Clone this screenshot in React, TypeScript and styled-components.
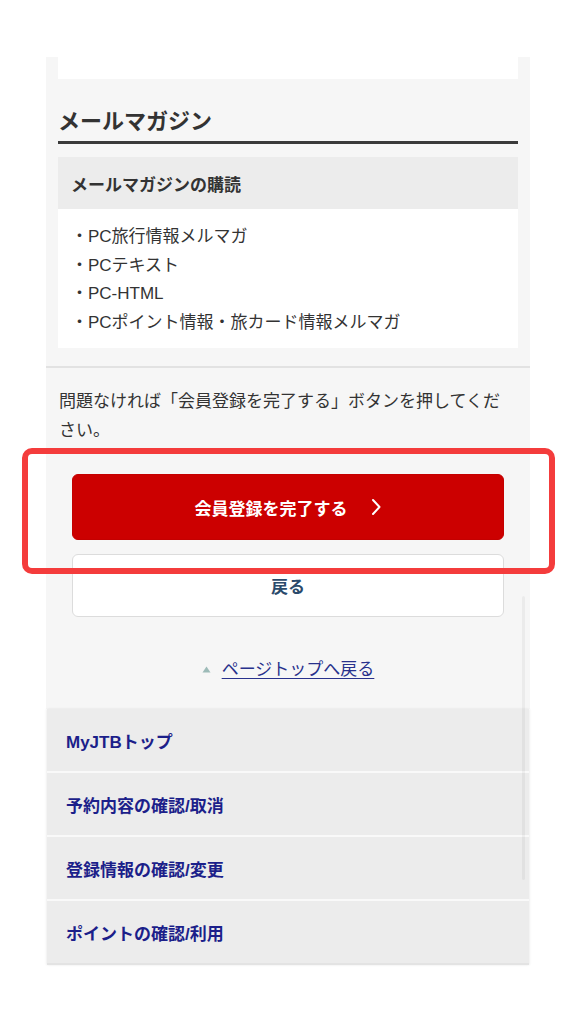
import React from "react";
import styled, { createGlobalStyle } from "styled-components";

const Global = createGlobalStyle`
  html, body {
    margin: 0;
    padding: 0;
    background: #ffffff;
  }
  body {
    font-family: "Liberation Sans", "Noto Sans CJK JP", sans-serif;
    color: #333333;
    -webkit-font-smoothing: antialiased;
  }
  * { box-sizing: border-box; }
`;

const Page = styled.div`
  position: relative;
  width: 576px;
  min-height: 1024px;
  padding-top: 57px;
  background: #ffffff;
`;

const Panel = styled.div`
  width: 484px;
  margin-left: 46px;
  background: #f6f6f6;
`;

const Section = styled.section`
  padding: 0 12px 18px;
  border-bottom: 2px solid #e2e2e2;
`;

const PrevCard = styled.div`
  height: 22px;
  background: #ffffff;
`;

const Title = styled.h2`
  margin: 0;
  padding: 28px 0 4px;
  font-size: 22px;
  line-height: 30px;
  font-weight: 700;
  color: #333333;
  border-bottom: 3px solid #3a3a3a;
`;

const SubHeader = styled.div`
  margin-top: 13px;
  height: 52px;
  display: flex;
  align-items: center;
  padding-left: 13px;
  background: #ececec;
  font-size: 17px;
  font-weight: 700;
  color: #333333;
`;

const List = styled.ul`
  margin: 0;
  list-style: none;
  padding: 14px 13px 11px;
  background: #ffffff;
`;

const Item = styled.li`
  font-size: 17px;
  line-height: 28.5px;
  color: #333333;
`;

const Actions = styled.div`
  padding: 19px 13px 25px;
  display: flex;
  flex-direction: column;
`;

const Note = styled.p`
  margin: 0;
  padding-right: 10px;
  font-size: 17px;
  line-height: 29px;
  color: #333333;
`;

const Button = styled.button<{ $primary?: boolean }>`
  margin: ${(p) => (p.$primary ? "29px 13px 0" : "14px 13px 0")};
  height: ${(p) => (p.$primary ? "66px" : "63px")};
  display: flex;
  align-items: center;
  justify-content: center;
  gap: 22px;
  border-radius: 6px;
  border: 1px solid ${(p) => (p.$primary ? "#c40000" : "#dcdcdc")};
  background: ${(p) => (p.$primary ? "#cc0000" : "#ffffff")};
  color: ${(p) => (p.$primary ? "#ffffff" : "#2b4a6b")};
  font-family: inherit;
  font-size: 17px;
  font-weight: 700;
  cursor: pointer;
`;

const TopLink = styled.a`
  margin-top: 38px;
  align-self: center;
  display: flex;
  align-items: center;
  gap: 11px;
  font-size: 17px;
  line-height: 29px;
  color: #28318c;
  text-decoration: none;
`;

const TopLinkText = styled.span`
  text-decoration: underline;
  text-underline-offset: 3px;
`;

const Footer = styled.nav`
  width: 482px;
  margin-left: 47px;
  display: flex;
  flex-direction: column;
  gap: 2px;
  background: #f9f9f9;
  border-bottom: 2px solid #e3e3e3;
  box-shadow: 1px 0 2px rgba(0, 0, 0, 0.06), -1px 0 2px rgba(0, 0, 0, 0.06);
`;

const FooterRow = styled.a`
  height: 62px;
  display: flex;
  align-items: center;
  padding-left: 19px;
  background: #ececec;
  font-size: 17px;
  font-weight: 700;
  color: #1c1f8a;
  text-decoration: none;
`;

const Highlight = styled.div`
  position: absolute;
  left: 22px;
  top: 448px;
  width: 533px;
  height: 126px;
  border: 6px solid #f43c3c;
  border-radius: 10px;
  pointer-events: none;
`;

const ScrollTrack = styled.div`
  position: absolute;
  left: 522px;
  top: 596px;
  width: 3px;
  height: 284px;
  background: rgba(0, 0, 0, 0.045);
  border-radius: 2px;
`;

const Chevron = () => (
  <svg width="12" height="18" viewBox="0 0 12 18" aria-hidden="true">
    <polyline points="3,2 9.5,9 3,16" fill="none" stroke="#ffffff" strokeWidth="2" strokeLinecap="round" strokeLinejoin="round" />
  </svg>
);

const UpTriangle = () => (
  <svg width="9" height="7" viewBox="0 0 9 7" aria-hidden="true">
    <polygon points="4.5,0.5 8.5,6.5 0.5,6.5" fill="#9dbbb8" />
  </svg>
);

const items = [
  "・PC旅行情報メルマガ",
  "・PCテキスト",
  "・PC-HTML",
  "・PCポイント情報・旅カード情報メルマガ",
];

const links = ["MyJTBトップ", "予約内容の確認/取消", "登録情報の確認/変更", "ポイントの確認/利用"];

export default function App() {
  return (
    <Page>
      <Global />
      <Panel>
        <Section>
          <PrevCard />
          <Title>メールマガジン</Title>
          <SubHeader>メールマガジンの購読</SubHeader>
          <List>
            {items.map((t) => (
              <Item key={t}>{t}</Item>
            ))}
          </List>
        </Section>
        <Actions>
          <Note>問題なければ「会員登録を完了する」ボタンを押してください。</Note>
          <Button $primary>
            <span>会員登録を完了する</span>
            <Chevron />
          </Button>
          <Button>戻る</Button>
          <TopLink href="#">
            <UpTriangle />
            <TopLinkText>ページトップへ戻る</TopLinkText>
          </TopLink>
        </Actions>
      </Panel>
      <Footer>
        {links.map((l) => (
          <FooterRow key={l} href="#">
            {l}
          </FooterRow>
        ))}
      </Footer>
      <ScrollTrack />
      <Highlight />
    </Page>
  );
}
